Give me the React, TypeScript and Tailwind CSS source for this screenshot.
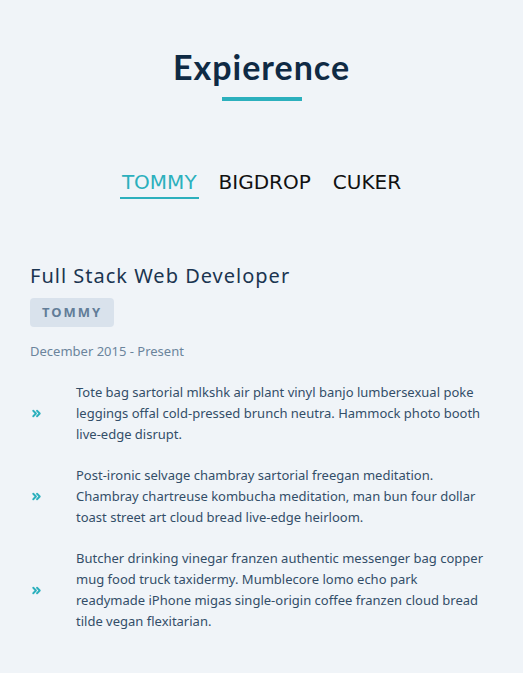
import { ChevronsRight } from "lucide-react";

const tabs = ["TOMMY", "BIGDROP", "CUKER"];

const points = [
  "Tote bag sartorial mlkshk air plant vinyl banjo lumbersexual poke leggings offal cold-pressed brunch neutra. Hammock photo booth live-edge disrupt.",
  "Post-ironic selvage chambray sartorial freegan meditation. Chambray chartreuse kombucha meditation, man bun four dollar toast street art cloud bread live-edge heirloom.",
  "Butcher drinking vinegar franzen authentic messenger bag copper mug food truck taxidermy. Mumblecore lomo echo park readymade iPhone migas single-origin coffee franzen cloud bread tilde vegan flexitarian.",
];

export default function App() {
  return (
    <div className="min-h-[673px] w-full bg-[#f0f4f8] pt-[44px] font-['Noto_Sans',sans-serif]">
      {/* Heading */}
      <div className="flex flex-col items-center">
        <h1 className="font-['Lato',sans-serif] text-[34px] font-bold leading-[46px] tracking-[1px] text-[#0f2a44]">
          Expierence
        </h1>
        <div className="mt-[7px] h-1 w-20 bg-[#2cb0bd]"></div>
      </div>

      {/* Tabs */}
      <div className="mt-[67px] flex justify-center gap-[18px] font-['DejaVu_Sans',sans-serif] text-[20px] leading-[28px]">
        {tabs.map((t, i) => (
          <div
            key={t}
            className={`px-[2px] pb-[1px] border-b-2 ${
              i === 0 ? "border-[#2cb0bd] text-[#2cb0bd]" : "border-transparent text-[#111111]"
            }`}
          >
            {t}
          </div>
        ))}
      </div>

      {/* Job */}
      <div className="mt-[63px] px-[30px]">
        <h2 className="text-[20px] leading-[28px] tracking-[1px] text-[#1b3550]">
          Full Stack Web Developer
        </h2>
        <div className="mt-[8px] inline-block rounded-[4px] bg-[#d9e2ec] px-3 py-[5px] text-[13px] font-bold leading-[19px] tracking-[2px] text-[#627d98]">
          TOMMY
        </div>
        <p className="mt-[14px] text-[13px] leading-[20px] text-[#6b849c]">December 2015 - Present</p>

        <ul className="mt-[21px] flex flex-col gap-[20px] pr-[8px]">
          {points.map((p, i) => (
            <li key={i} className="flex items-center">
              <div className="w-[46px] shrink-0 text-[#2cb0bd]">
                <ChevronsRight size={13} strokeWidth={3.5} />
              </div>
              <p className="text-[13px] leading-[21px] text-[#334e68]">{p}</p>
            </li>
          ))}
        </ul>
      </div>
    </div>
  );
}
